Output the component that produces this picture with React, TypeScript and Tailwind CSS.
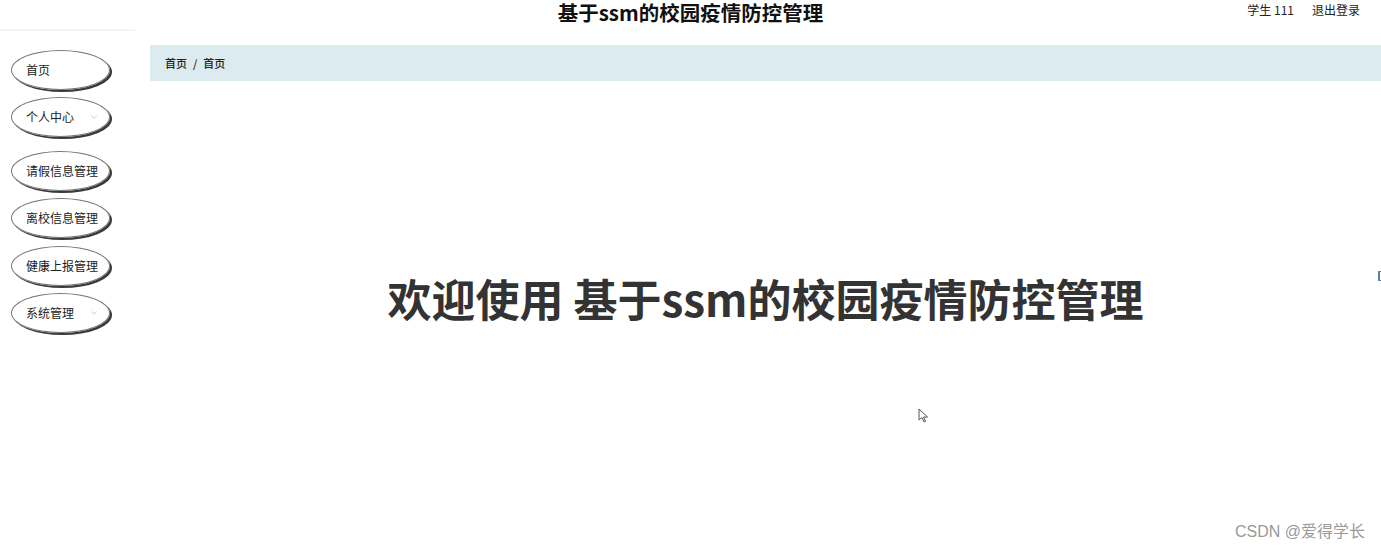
import { ChevronDown } from "lucide-react";

const menu = [
  { label: "首页", sub: false, mt: "" },
  { label: "个人中心", sub: true, mt: "mt-[7px]" },
  { label: "请假信息管理", sub: false, mt: "mt-[14px]" },
  { label: "离校信息管理", sub: false, mt: "mt-[7px]" },
  { label: "健康上报管理", sub: false, mt: "mt-[8px]" },
  { label: "系统管理", sub: true, mt: "mt-[7px]" },
];

const font = { fontFamily: '"Microsoft YaHei", "Noto Sans CJK SC", sans-serif' };

export default function App() {
  return (
    <div className="relative w-[1381px] h-[552px] bg-white text-[#333] overflow-hidden" style={font}>
      {/* header */}
      <header className="relative h-[30px] flex items-start justify-center">
        <h1 className="text-[20.5px] font-bold text-[#111] leading-[22px] mt-[1px]">基于ssm的校园疫情防控管理</h1>
        <div className="absolute right-[21px] top-[1px] flex gap-[18px] text-[12px] text-[#222]">
          <span>学生 111</span>
          <span>退出登录</span>
        </div>
      </header>

      <div className="flex">
        {/* sidebar */}
        <aside className="w-[150px] shrink-0">
          <div className="w-[135px] h-[2px] bg-[#eef5fb] -mt-[1px]" />
          <nav className="flex flex-col pl-[11px] pt-[19px]">
            {menu.map((m) => (
              <div
                key={m.label}
                className={`relative w-[99px] h-[40px] rounded-[50%] border border-[#777] shadow-[2px_2px_0_#3a3a3a] flex items-center pl-[14px] text-[12px] text-[#222] ${m.mt}`}
              >
                <span className="whitespace-nowrap">{m.label}</span>
                {m.sub && <ChevronDown className="absolute right-[10px] top-[14px] w-[10px] h-[10px] text-[#aaa]" strokeWidth={1.5} />}
              </div>
            ))}
          </nav>
        </aside>

        {/* main */}
        <main className="flex-1 pt-[15px]">
          <div className="h-[36px] bg-[#dcebef] flex items-center pl-[15px] text-[11px] font-medium text-[#222]">
            首页<span className="mx-[6px]">/</span>首页
          </div>
          <div className="flex justify-center pt-[195px]">
            <h2 className="text-[44px] font-bold text-[#333] leading-none">欢迎使用 基于ssm的校园疫情防控管理</h2>
          </div>
        </main>
      </div>

      {/* mouse cursor */}
      <svg className="absolute left-[918px] top-[408px]" width="11" height="16" viewBox="0 0 11 16">
        <path d="M1 1 L1 12 L4 9.5 L6 14 L7.5 13.3 L5.6 9 L9.5 9 Z" fill="#fff" stroke="#555" strokeWidth="1" />
      </svg>
      {/* edge bracket */}
      <div className="absolute left-[1378px] top-[271px] w-[3px] h-[10px] border-l-2 border-y border-[#5b7fa8]" />

      <div
        className="absolute right-[16px] bottom-[8px] text-[16px] text-[#999]"
        style={{ fontFamily: '"Liberation Sans", "Noto Sans CJK SC", sans-serif', textShadow: "0 0 2px #fff" }}
      >
        CSDN @爱得学长
      </div>
    </div>
  );
}
